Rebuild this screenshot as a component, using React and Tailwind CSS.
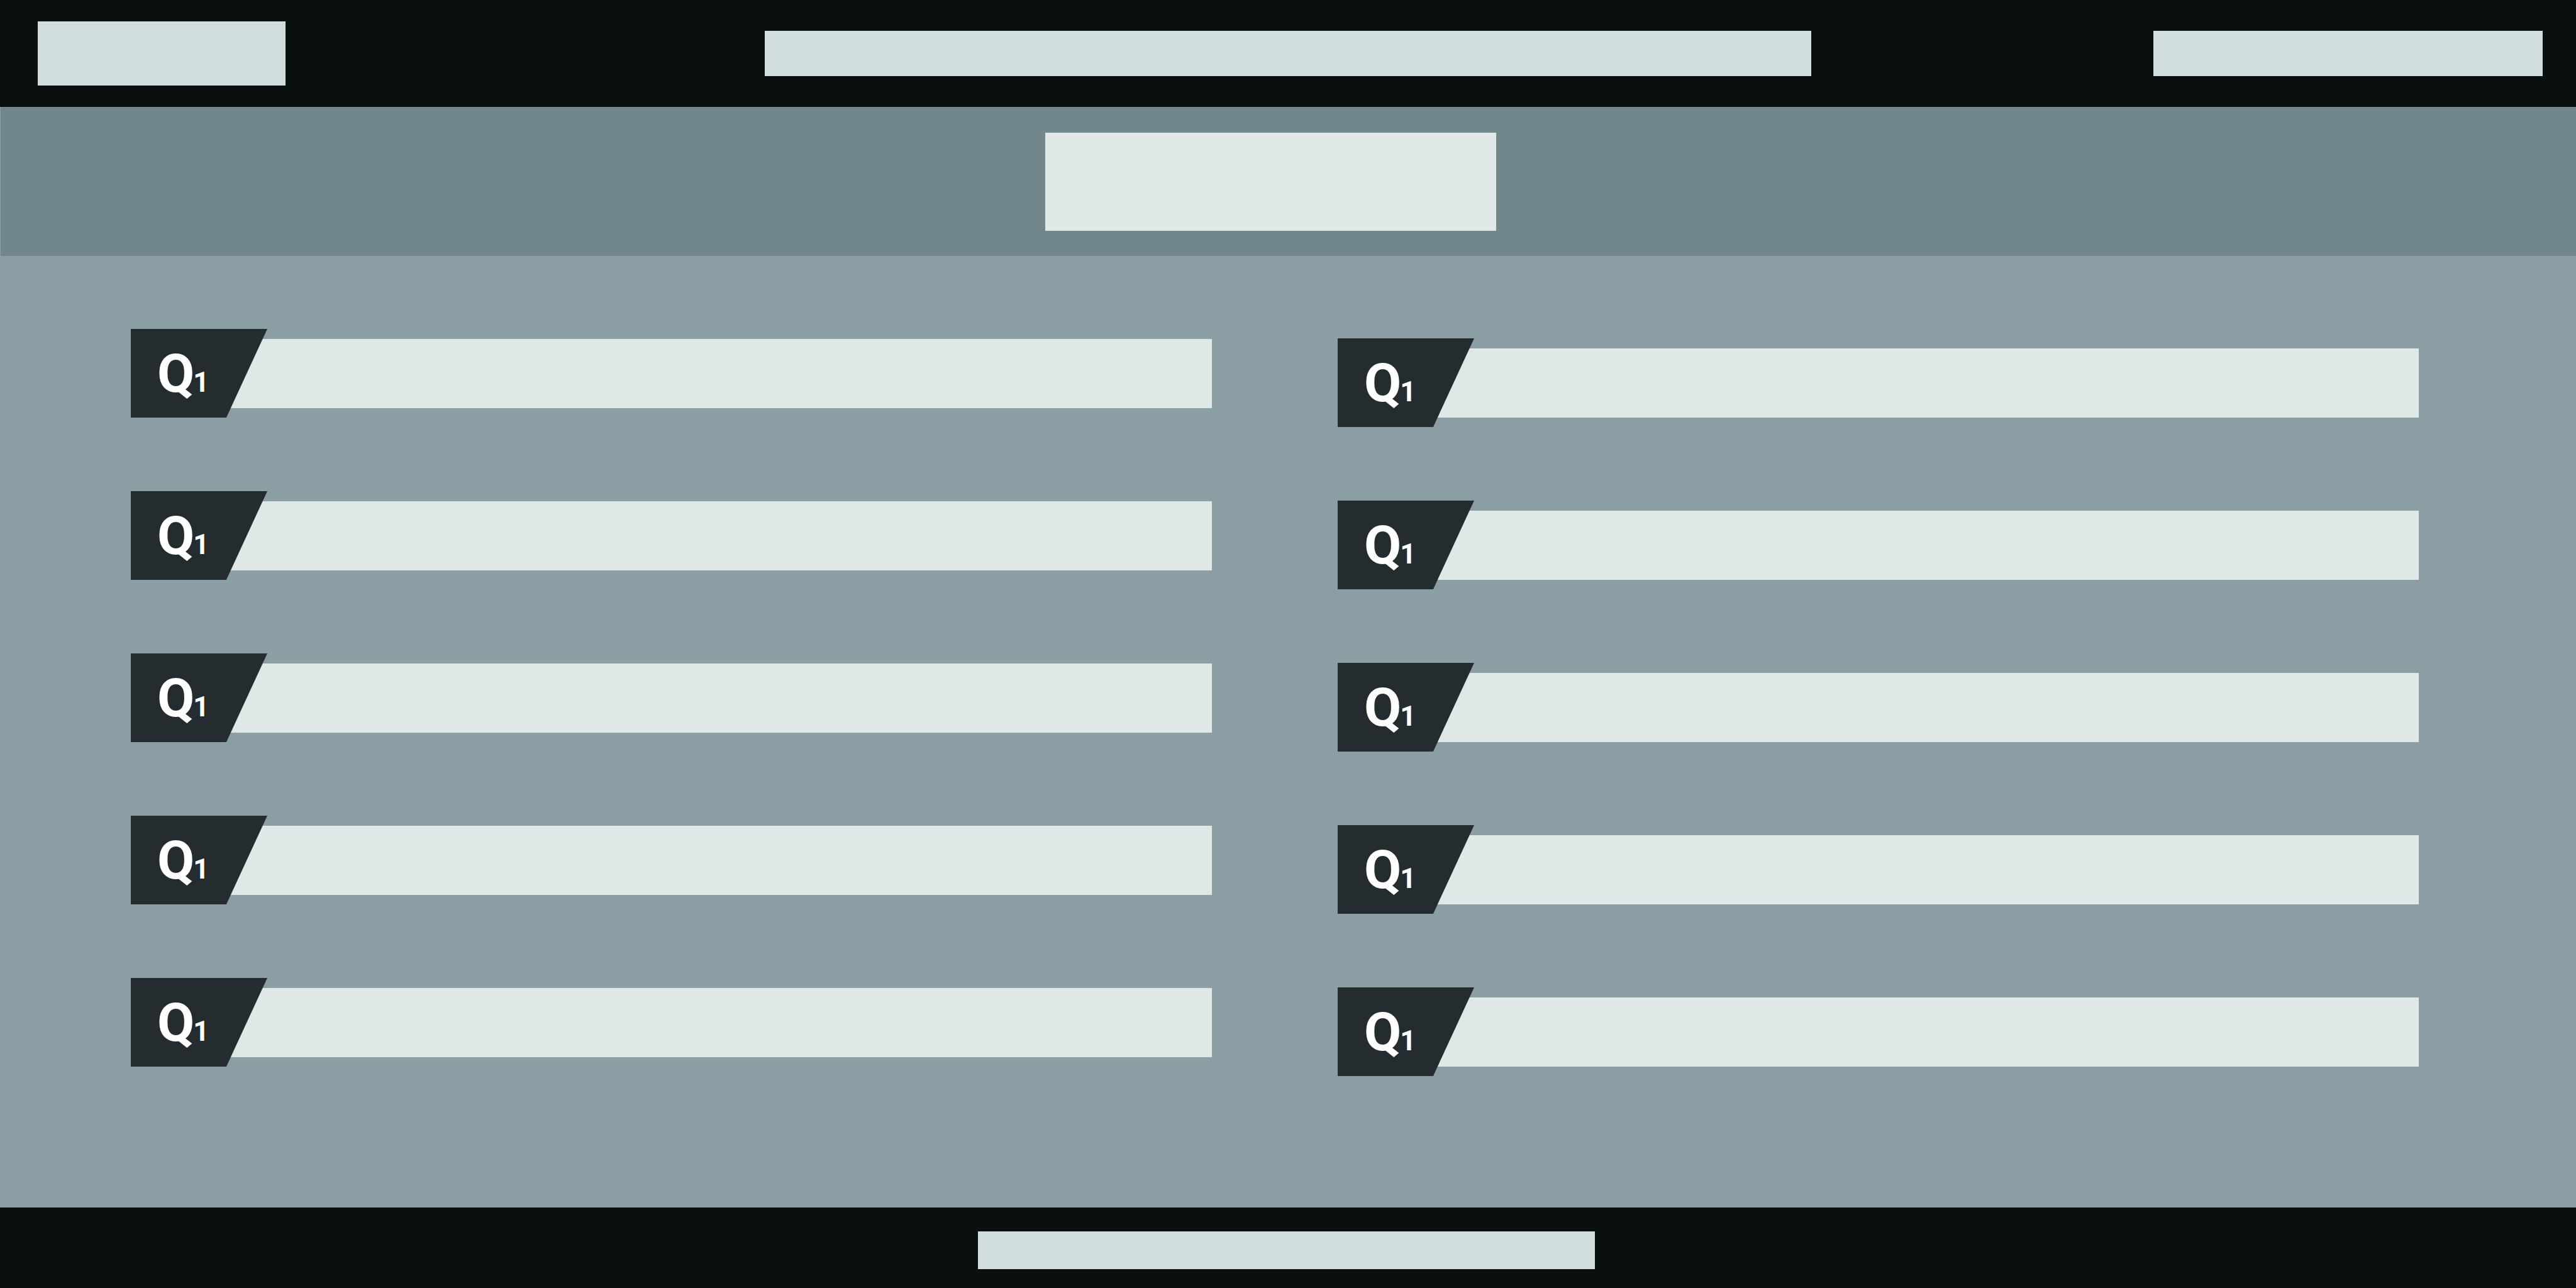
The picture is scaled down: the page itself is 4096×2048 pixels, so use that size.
const QUESTIONS_PER_COLUMN = 5;

function QuestionRow() {
  return (
    <li className="grid items-center">
      <div className="col-start-1 row-start-1 h-[110px] bg-[#e0e8e7]" />
      <div className="col-start-1 row-start-1 flex h-[141px] w-[217px] items-baseline bg-[#242c2f] pl-[42px] pt-[21px] font-['Roboto',sans-serif] font-bold text-white [clip-path:polygon(0_0,100%_0,70%_100%,0_100%)]">
        <span className="text-[86px] leading-[100px]">Q</span>
        <span className="-ml-0.5 text-[44px] leading-[50px]">1</span>
      </div>
    </li>
  );
}

function QuestionColumn({ className }) {
  return (
    <ol className={className}>
      {Array.from({ length: QUESTIONS_PER_COLUMN }, (_, i) => (
        <QuestionRow key={i} />
      ))}
    </ol>
  );
}

export default function App() {
  return (
    <div className="flex min-h-screen flex-col bg-[#8a9ea3]">
      <header className="grid grid-cols-[60fr_394fr_762fr_1664fr_544fr_619fr_53fr] items-center bg-[#0a0f10] py-[34px]">
        <div className="col-start-2 h-[102px] bg-[#d2dedd]" />
        <div className="col-start-4 h-[72px] bg-[#d2dedd]" />
        <div className="col-start-6 h-[72px] bg-[#d2dedd]" />
      </header>

      <section className="grid grid-cols-[1661fr_717fr_1717fr] border-l border-[#8a9ea3] bg-[#71878c] pt-[41px] pb-[40px]">
        <div className="col-start-2 h-[156px] bg-[#e0e8e7]" />
      </section>

      <main className="grid flex-1 grid-cols-2 items-start gap-[200px] pt-[116px] pr-[250px] pl-[208px]">
        <QuestionColumn className="flex flex-col gap-[117px]" />
        <QuestionColumn className="flex flex-col gap-[117px] pt-[15px]" />
      </main>

      <footer className="grid grid-cols-[1555fr_981fr_1560fr] bg-[#0a0f10] pt-[38px] pb-[30px]">
        <div className="col-start-2 h-[60px] bg-[#d2dedd]" />
      </footer>
    </div>
  );
}
